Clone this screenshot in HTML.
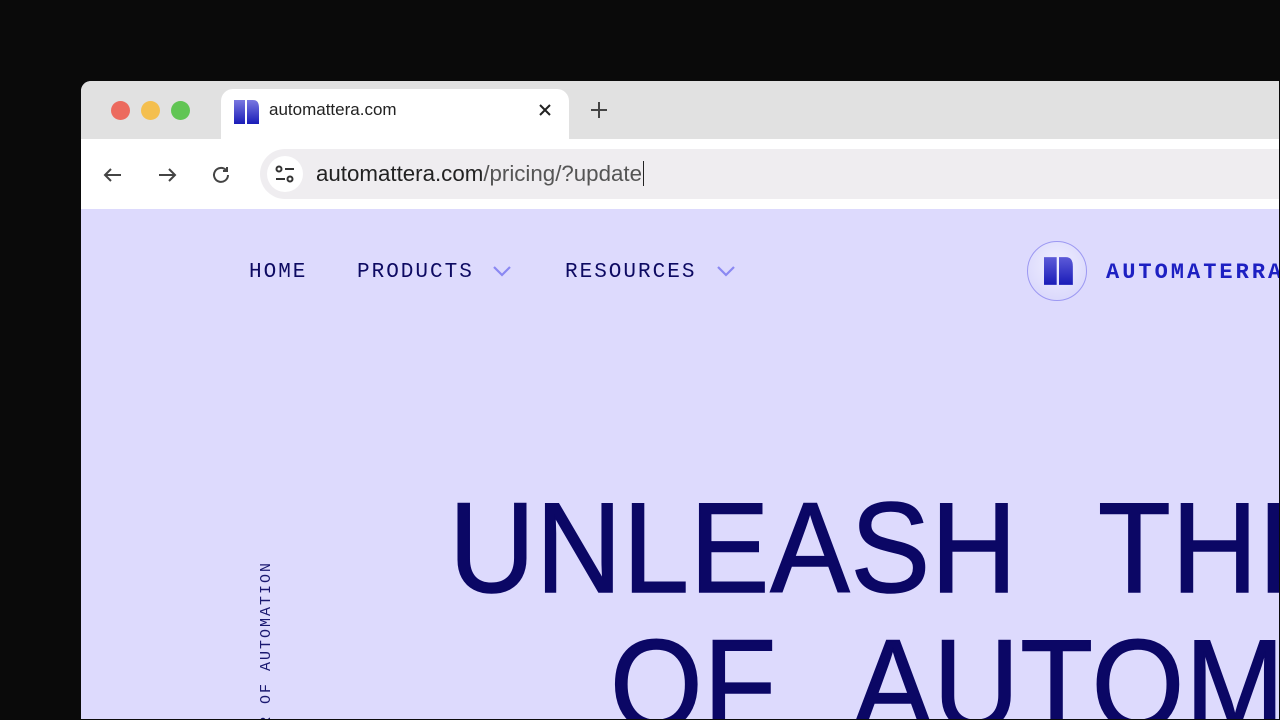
<!DOCTYPE html>
<html><head><style>
*{margin:0;padding:0;box-sizing:border-box}
html,body{width:1280px;height:720px;overflow:hidden}
body{background:#0a0a0a;position:relative;font-family:"Liberation Sans",sans-serif}
.win{position:absolute;left:81px;top:81px;width:1198px;height:638px;background:#dddafd;border-radius:10px 0 0 0;overflow:hidden}
.tabbar{position:absolute;left:0;top:0;width:100%;height:58px;background:#e1e1e1}
.dot{position:absolute;top:20px;width:19px;height:19px;border-radius:50%}
.tab{position:absolute;left:140px;top:8px;width:348px;height:52px;background:#fff;border-radius:12px 12px 0 0}
.toolbar{position:absolute;left:0;top:58px;width:100%;height:70px;background:#fff}
.url{position:absolute;left:179px;top:10px;width:1100px;height:50px;background:#efedf0;border-radius:25px}
.nav{position:absolute;top:180px;font-family:"Liberation Mono",monospace;font-size:21px;letter-spacing:2px;color:#0d0a62}
.h{position:absolute;font-size:128px;color:#0b0765;white-space:nowrap;transform:scaleX(.93);transform-origin:left top;letter-spacing:1px;word-spacing:52px;line-height:1;-webkit-text-stroke:1.5px #0b0765}
</style></head><body>
<div class="win">
 <div class="tabbar">
  <div class="dot" style="left:30px;background:#ec6a5e"></div>
  <div class="dot" style="left:60px;background:#f4bf4f"></div>
  <div class="dot" style="left:90px;background:#61c554"></div>
  <div class="tab">
   <svg style="position:absolute;left:13px;top:11px" width="26" height="24" viewBox="0 0 26 24"><defs><linearGradient id="g" x1="0" y1="0" x2="0" y2="1"><stop offset="0" stop-color="#7a78e0"/><stop offset="1" stop-color="#1a1cb8"/></linearGradient></defs><rect x="0" y="0" width="11" height="24" fill="url(#g)"/><path d="M13 0h6q6 0 6 8v16h-12z" fill="url(#g)"/></svg>
   <div style="position:absolute;left:48px;top:11px;font-size:17px;color:#222">automattera.com</div>
   <svg style="position:absolute;left:318px;top:15px" width="12" height="12" viewBox="0 0 12 12" stroke="#222" stroke-width="2"><path d="M1 1l10 10M11 1L1 11"/></svg>
  </div>
  <svg style="position:absolute;left:510px;top:21px" width="16" height="16" viewBox="0 0 16 16" stroke="#444" stroke-width="2"><path d="M8 0v16M0 8h16"/></svg>
 </div>
 <div class="toolbar">
  <svg style="position:absolute;left:20px;top:24px" width="24" height="24" viewBox="0 0 24 24" fill="none" stroke="#444" stroke-width="2"><path d="M20 12H4M10 6l-6 6 6 6"/></svg>
  <svg style="position:absolute;left:74px;top:24px" width="24" height="24" viewBox="0 0 24 24" fill="none" stroke="#444" stroke-width="2"><path d="M4 12h16M14 6l6 6-6 6"/></svg>
  <svg style="position:absolute;left:128px;top:24px" width="24" height="24" viewBox="0 0 24 24" fill="none" stroke="#444" stroke-width="2"><path d="M19 12a7 7 0 1 1-2-5"/><path d="M18 4v4h-4"/></svg>
  <div class="url">
   <div style="position:absolute;left:7px;top:7px;width:36px;height:36px;border-radius:50%;background:#fff"></div>
   <svg style="position:absolute;left:14px;top:14px" width="22" height="22" viewBox="0 0 22 22" fill="none" stroke="#333" stroke-width="2"><circle cx="5" cy="6" r="2.5"/><path d="M11 6h9M2 16h9"/><circle cx="16" cy="16" r="2.5"/></svg>
   <div style="position:absolute;left:56px;top:12px;font-size:22.3px;color:#222">automattera.com<span style="color:#555">/pricing/?update</span><span style="border-left:1.5px solid #222;margin-left:1px"></span></div>
  </div>
 </div>
 <div class="nav" style="left:168px">HOME</div>
 <div class="nav" style="left:276px">PRODUCTS</div>
 <svg style="position:absolute;left:411px;top:184px" width="20" height="12" viewBox="0 0 20 12" fill="none" stroke="#8a88f2" stroke-width="2.2"><path d="M2 2l8 8 8-8"/></svg>
 <div class="nav" style="left:484px">RESOURCES</div>
 <svg style="position:absolute;left:635px;top:184px" width="20" height="12" viewBox="0 0 20 12" fill="none" stroke="#8a88f2" stroke-width="2.2"><path d="M2 2l8 8 8-8"/></svg>
 <div style="position:absolute;left:946px;top:160px;width:60px;height:60px;border-radius:50%;background:radial-gradient(circle at 50% 40%,#f0efff,#d4d2fb);border:1.5px solid #9c98f2"></div>
 <svg style="position:absolute;left:963px;top:176px" width="30" height="28" viewBox="0 0 26 24"><defs><linearGradient id="g2" x1="0" y1="0" x2="0" y2="1"><stop offset="0" stop-color="#5c5ad8"/><stop offset="1" stop-color="#1a1cb8"/></linearGradient></defs><rect x="0" y="0" width="11" height="24" fill="url(#g2)"/><path d="M13 0h6q6 0 6 8v16h-12z" fill="url(#g2)"/></svg>
 <div class="nav" style="left:1025px;top:179px;font-weight:bold;color:#1d20c2;font-size:22px;letter-spacing:3px">AUTOMATERRA</div>
 <div class="h" style="left:368px;top:404px">UNLEASH THE</div>
 <div class="h" style="left:529px;top:541px">OF AUTOMATION</div>
 <div style="position:absolute;left:177px;top:733px;transform:rotate(-90deg);transform-origin:left top;font-family:'Liberation Mono',monospace;font-size:15px;letter-spacing:2px;color:#1a1870;white-space:nowrap;">THE POWER OF AUTOMATION</div>
</div>
</body></html>
